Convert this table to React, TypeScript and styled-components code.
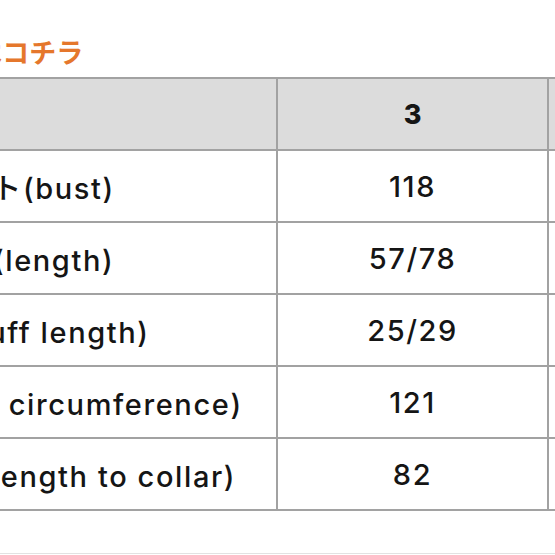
import React from 'react';
import styled, { createGlobalStyle } from 'styled-components';

const GlobalStyle = createGlobalStyle`
  html, body {
    margin: 0;
    padding: 0;
    background: #ffffff;
    overflow: hidden;
  }
  body {
    font-family: Inter, "Liberation Sans", "Noto Sans CJK JP", sans-serif;
  }
`;

const SizeChartBlock = styled.div`
  width: 555px;
  height: 555px;
  overflow: hidden;
  position: relative;
`;

const Title = styled.h2`
  margin: 0 0 0 -105px;
  padding-top: 37px;
  height: 40px;
  font-family: "Noto Sans CJK JP", sans-serif;
  font-size: 27px;
  line-height: 30px;
  font-weight: 700;
  color: #e5772c;
  white-space: nowrap;
`;

const Table = styled.table`
  width: 1052px;
  margin-left: -232px;
  border-collapse: separate;
  border-spacing: 0;
  border-top: 2px solid #a2a2a2;
  border-left: 2px solid #a2a2a2;
  table-layout: fixed;
`;

const Cell = styled.td<{ $head?: boolean }>`
  height: 70px;
  padding: 0;
  text-align: center;
  vertical-align: middle;
  white-space: nowrap;
  border-right: 2px solid #a2a2a2;
  border-bottom: 2px solid #a2a2a2;
  background: ${(p) => (p.$head ? '#dcdcdc' : '#ffffff')};
  color: #151515;
  font-family: Inter, "Noto Sans CJK JP", sans-serif;
  font-size: ${(p) => (p.$head ? '27px' : '29px')};
  font-weight: ${(p) => (p.$head ? 800 : 500)};
  letter-spacing: ${(p) => (p.$head ? '0' : '1.6px')};
`;

const Divider = styled.div`
  margin-top: 42px;
  height: 1px;
  background: #e2e2e2;
`;

const rows = [
  { label: 'バスト(bust)', sizes: ['118', '122'] },
  { label: '着丈(length)', sizes: ['57/78', '58/80'] },
  { label: '袖丈(cuff length)', sizes: ['25/29', '26/30'] },
  { label: '袖口周り(cuff circumference)', sizes: ['121', '125'] },
  { label: '裄丈(sleeve length to collar)', sizes: ['82', '84'] },
];

const App: React.FC = () => {
  return (
    <SizeChartBlock>
      <GlobalStyle />
      <Title>サイズはコチラ</Title>
      <Table>
        <colgroup>
          <col style={{ width: 508 }} />
          <col style={{ width: 271 }} />
          <col style={{ width: 271 }} />
        </colgroup>
        <thead>
          <tr>
            <Cell as="th" $head />
            <Cell as="th" $head>3</Cell>
            <Cell as="th" $head>4</Cell>
          </tr>
        </thead>
        <tbody>
          {rows.map((row) => (
            <tr key={row.label}>
              <Cell>{row.label}</Cell>
              {row.sizes.map((size, i) => (
                <Cell key={i}>{size}</Cell>
              ))}
            </tr>
          ))}
        </tbody>
      </Table>
      <Divider />
    </SizeChartBlock>
  );
};

export default App;
